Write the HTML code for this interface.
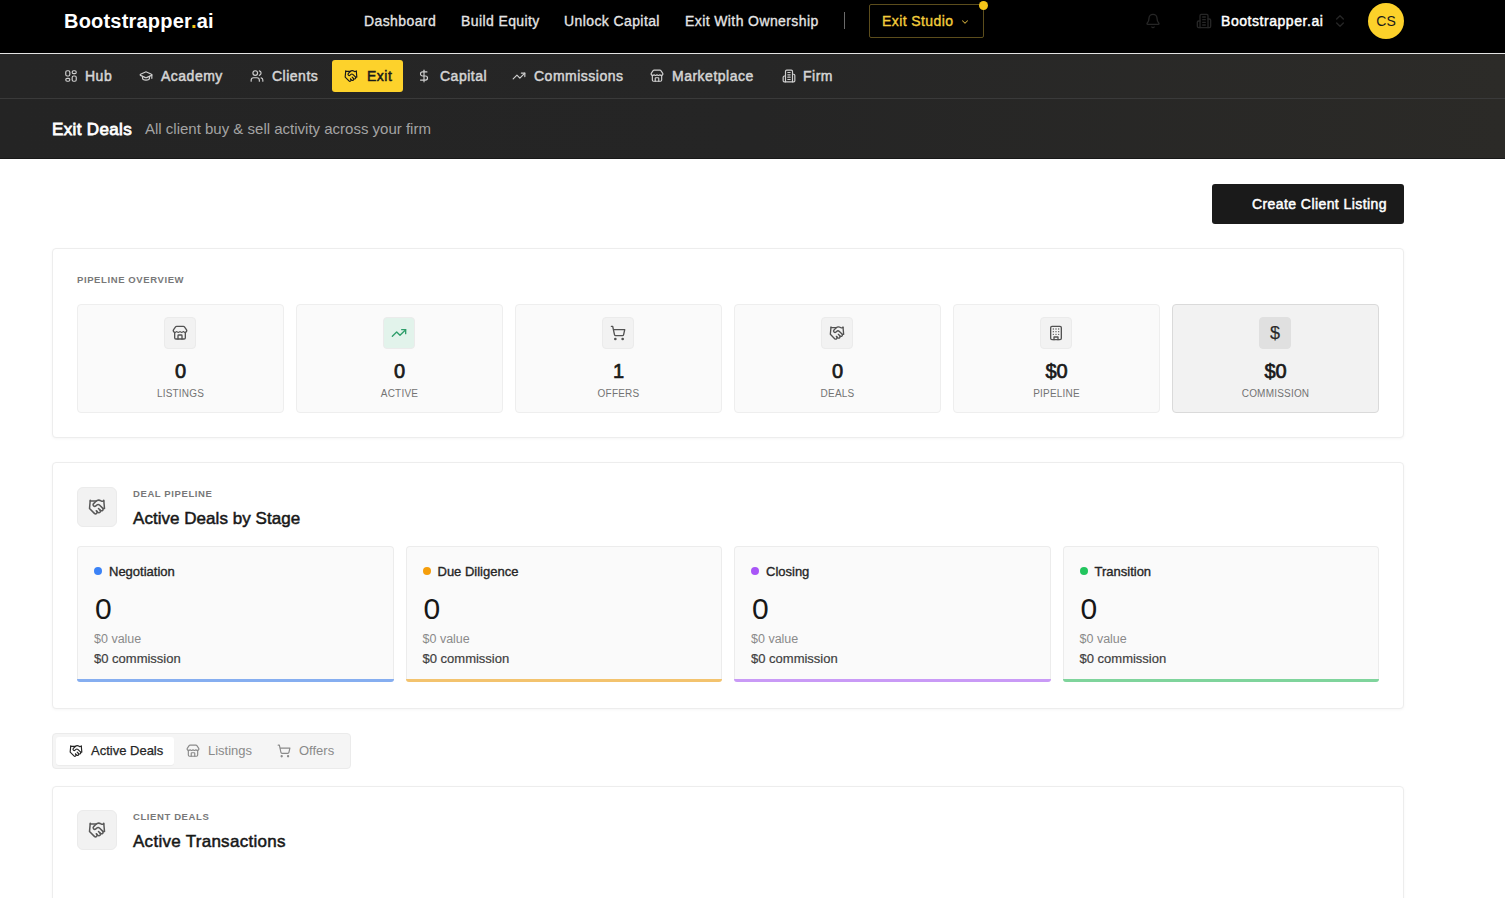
<!DOCTYPE html>
<html><head><meta charset="utf-8">
<style>
*{margin:0;padding:0;box-sizing:border-box}
html,body{width:1505px;height:898px;overflow:hidden;background:#fff;font-family:"Liberation Sans",sans-serif}
.abs{position:absolute}
.t{position:absolute;white-space:nowrap;line-height:1}
svg{position:absolute;fill:none;stroke-linecap:round;stroke-linejoin:round}
#top{position:absolute;left:0;top:0;width:1505px;height:54px;background:#000;border-bottom:1px solid #e3e3e3}
#nav2{position:absolute;left:0;top:54px;width:1505px;height:45px;background:linear-gradient(90deg,#252525 0%,#262626 50%,#2c2b28 100%);border-bottom:1px solid #3a3a3a}
#hdr{position:absolute;left:0;top:99px;width:1505px;height:60px;background:linear-gradient(90deg,#242424 0%,#252525 50%,#2b2a27 100%);border-bottom:1px solid #181818}
.toplink{color:#e5e5e5;font-size:14px;letter-spacing:0.4px;-webkit-text-stroke:0.3px #e5e5e5}
.nv{color:#d4d4d4;font-size:14px;letter-spacing:0.5px;-webkit-text-stroke:0.5px currentColor}
.card{position:absolute;background:#fff;border:1px solid #ededed;border-radius:4px;box-shadow:0 1px 3px rgba(0,0,0,0.04)}
.stat{position:absolute;top:304px;width:207px;height:109px;background:#fafafa;border:1px solid #eeeeee;border-radius:4px}
.stat .ib{position:absolute;left:86px;top:12px;width:32px;height:32px;background:#f2f2f2;border:1px solid #ebebeb;border-radius:4px}
.stat.hl{background:#f2f2f2;border-color:#dadada}
.stat .num{position:absolute;left:0;width:205px;text-align:center;top:56px;font-size:20px;color:#1a1a1a;-webkit-text-stroke:0.7px #1a1a1a;line-height:1}
.stat .lbl{position:absolute;left:0;width:205px;text-align:center;top:84px;font-size:10px;color:#737373;letter-spacing:0.2px;line-height:1}
.eyebrow{font-size:9.5px;font-weight:bold;color:#787878;letter-spacing:0.6px}
.stage{position:absolute;top:546px;width:316.5px;height:136px;background:#fafafa;border:1px solid #ececec;border-bottom:none;border-radius:4px}
.stage .bar{position:absolute;left:-1px;right:-1px;bottom:0;height:3px;border-radius:0 0 4px 4px}
.stage .dot{position:absolute;left:16px;top:20px;width:8px;height:8px;border-radius:50%}
.stage .nm{position:absolute;left:31px;top:18px;font-size:13px;color:#262626;-webkit-text-stroke:0.35px #262626}
.stage .big{position:absolute;left:17px;top:47px;font-size:30px;color:#171717}
.stage .val{position:absolute;left:16px;top:86px;font-size:12.5px;color:#8a8a8a}
.stage .com{position:absolute;left:16px;top:105px;font-size:13px;color:#404040;-webkit-text-stroke:0.2px #404040}
</style></head><body>
<div id="top"></div>
<div id="nav2"></div>
<div id="hdr"></div>

<!-- top bar -->
<div class="t" style="left:64px;top:11px;font-size:20px;font-weight:bold;color:#fff;letter-spacing:0.2px">Bootstrapper<span style="color:#f5c518">.</span>ai</div>
<div class="t toplink" style="left:364px;top:14px">Dashboard</div>
<div class="t toplink" style="left:461px;top:14px">Build Equity</div>
<div class="t toplink" style="left:564px;top:14px">Unlock Capital</div>
<div class="t toplink" style="left:685px;top:14px">Exit With Ownership</div>
<div class="abs" style="left:844px;top:12px;width:1px;height:17px;background:#6a6a6a"></div>
<div class="abs" style="left:869px;top:4px;width:115px;height:34px;border:1px solid #5c4d1c;border-radius:2px"></div>
<div class="t" style="left:882px;top:14px;font-size:14px;color:#f3cd3c;letter-spacing:0.4px;-webkit-text-stroke:0.35px #f3cd3c">Exit Studio</div>
<svg style="left:960px;top:17px" width="10" height="10" viewBox="0 0 24 24" stroke="#c9a73a" stroke-width="2.5"><path d="m6 9 6 6 6-6"/></svg>
<div class="abs" style="left:979px;top:1px;width:9px;height:9px;border-radius:50%;background:#f5c518"></div>

<svg style="left:1145px;top:13px" width="16" height="16" viewBox="0 0 24 24" stroke="#262626" stroke-width="2"><path d="M10.268 21a2 2 0 0 0 3.464 0"/><path d="M3.262 15.326A1 1 0 0 0 4 17h16a1 1 0 0 0 .74-1.673C19.41 13.956 18 12.499 18 8A6 6 0 0 0 6 8c0 4.499-1.411 5.956-2.738 7.326"/></svg>
<svg style="left:1196px;top:13px" width="16" height="16" viewBox="0 0 24 24" stroke="#262626" stroke-width="2"><path d="M6 22V4a2 2 0 0 1 2-2h8a2 2 0 0 1 2 2v18Z"/><path d="M6 12H4a2 2 0 0 0-2 2v6a2 2 0 0 0 2 2h2"/><path d="M18 9h2a2 2 0 0 1 2 2v9a2 2 0 0 1-2 2h-2"/><path d="M10 6h4"/><path d="M10 10h4"/><path d="M10 14h4"/><path d="M10 18h4"/></svg>
<div class="t" style="left:1221px;top:14px;font-size:14px;color:#fff;letter-spacing:0.55px;-webkit-text-stroke:0.45px #fff">Bootstrapper.ai</div>
<svg style="left:1332px;top:13px" width="16" height="16" viewBox="0 0 24 24" stroke="#262626" stroke-width="2"><path d="m7 15 5 5 5-5"/><path d="m7 9 5-5 5 5"/></svg>
<div class="abs" style="left:1368px;top:3px;width:36px;height:36px;border-radius:50%;background:#fcd12a"></div>
<div class="t" style="left:1368px;top:14px;width:36px;text-align:center;font-size:14px;color:#1a1a1a">CS</div>

<!-- nav 2 -->
<div class="abs" style="left:332px;top:60px;width:71px;height:32px;background:#fdd22b;border-radius:3px"></div>
<svg style="left:64px;top:69px" width="14" height="14" viewBox="0 0 24 24" stroke="#cfcfcf" stroke-width="2"><rect width="7" height="9" x="3" y="3" rx="2.5"/><rect width="7" height="5" x="14" y="3" rx="2.5"/><rect width="7" height="9" x="14" y="12" rx="2.5"/><rect width="7" height="5" x="3" y="16" rx="2.5"/></svg>
<div class="t nv" style="left:85px;top:69px">Hub</div>
<svg style="left:139px;top:69px" width="14" height="14" viewBox="0 0 24 24" stroke="#cfcfcf" stroke-width="2"><path d="M21.42 10.922a1 1 0 0 0-.019-1.838L12.83 5.18a2 2 0 0 0-1.66 0L2.6 9.08a1 1 0 0 0 0 1.832l8.57 3.908a2 2 0 0 0 1.66 0z"/><path d="M22 10v6"/><path d="M6 12.5V16a6 3 0 0 0 12 0v-3.5"/></svg>
<div class="t nv" style="left:161px;top:69px">Academy</div>
<svg style="left:250px;top:69px" width="14" height="14" viewBox="0 0 24 24" stroke="#cfcfcf" stroke-width="2"><path d="M16 21v-2a4 4 0 0 0-4-4H6a4 4 0 0 0-4 4v2"/><circle cx="9" cy="7" r="4"/><path d="M22 21v-2a4 4 0 0 0-3-3.87"/><path d="M16 3.13a4 4 0 0 1 0 7.75"/></svg>
<div class="t nv" style="left:272px;top:69px">Clients</div>
<svg style="left:344px;top:69px" width="14" height="14" viewBox="0 0 24 24" stroke="#1a1a1a" stroke-width="2"><path d="m11 17 2 2a1 1 0 1 0 3-3"/><path d="m14 14 2.5 2.5a1 1 0 1 0 3-3l-3.88-3.88a3 3 0 0 0-4.24 0l-.88.88a1 1 0 1 1-3-3l2.81-2.81a5.79 5.79 0 0 1 7.06-.87l.47.28a2 2 0 0 0 1.42.25L21 4"/><path d="m21 3 1 11h-2"/><path d="M3 3 2 14l6.5 6.5a1 1 0 1 0 3-3"/><path d="M3 4h8"/></svg>
<div class="t nv" style="left:367px;top:69px;color:#1a1a1a">Exit</div>
<svg style="left:417px;top:69px" width="14" height="14" viewBox="0 0 24 24" stroke="#cfcfcf" stroke-width="2"><line x1="12" x2="12" y1="2" y2="22"/><path d="M17 5H9.5a3.5 3.5 0 0 0 0 7h5a3.5 3.5 0 0 1 0 7H6"/></svg>
<div class="t nv" style="left:440px;top:69px">Capital</div>
<svg style="left:512px;top:69px" width="14" height="14" viewBox="0 0 24 24" stroke="#cfcfcf" stroke-width="2"><polyline points="22 7 13.5 15.5 8.5 10.5 2 17"/><polyline points="16 7 22 7 22 13"/></svg>
<div class="t nv" style="left:534px;top:69px">Commissions</div>
<svg style="left:650px;top:69px" width="14" height="14" viewBox="0 0 24 24" stroke="#cfcfcf" stroke-width="2"><path d="M15 21v-5a1 1 0 0 0-1-1h-4a1 1 0 0 0-1 1v5"/><path d="M17.774 10.31a1.12 1.12 0 0 0-1.549 0 2.5 2.5 0 0 1-3.451 0 1.12 1.12 0 0 0-1.548 0 2.5 2.5 0 0 1-3.452 0 1.12 1.12 0 0 0-1.549 0 2.5 2.5 0 0 1-3.77-3.248l2.889-4.184A2 2 0 0 1 7 2h10a2 2 0 0 1 1.653.873l2.895 4.192a2.5 2.5 0 0 1-3.774 3.244"/><path d="M4 10.95V19a2 2 0 0 0 2 2h12a2 2 0 0 0 2-2v-8.05"/></svg>
<div class="t nv" style="left:672px;top:69px">Marketplace</div>
<svg style="left:782px;top:69px" width="14" height="14" viewBox="0 0 24 24" stroke="#cfcfcf" stroke-width="2"><path d="M6 22V4a2 2 0 0 1 2-2h8a2 2 0 0 1 2 2v18Z"/><path d="M6 12H4a2 2 0 0 0-2 2v6a2 2 0 0 0 2 2h2"/><path d="M18 9h2a2 2 0 0 1 2 2v9a2 2 0 0 1-2 2h-2"/><path d="M10 6h4"/><path d="M10 10h4"/><path d="M10 14h4"/><path d="M10 18h4"/></svg>
<div class="t nv" style="left:803px;top:69px">Firm</div>

<!-- header -->
<div class="t" style="left:52px;top:121px;font-size:17px;color:#fff;letter-spacing:0.35px;-webkit-text-stroke:0.8px #fff">Exit Deals</div>
<div class="t" style="left:145px;top:121px;font-size:15px;color:#a3a3a3">All client buy &amp; sell activity across your firm</div>

<!-- create button -->
<div class="abs" style="left:1212px;top:184px;width:192px;height:40px;background:#1a1a1a;border-radius:3px"></div>
<div class="t" style="left:1252px;top:197px;font-size:14px;color:#fff;letter-spacing:0.42px;-webkit-text-stroke:0.5px #fff">Create Client Listing</div>

<!-- overview card -->
<div class="card" style="left:52px;top:248px;width:1352px;height:190px"></div>
<div class="t eyebrow" style="left:77px;top:275px">PIPELINE OVERVIEW</div>

<div class="stat " style="left:77px"><div class="ib" style="background:#f2f2f2"></div><svg style="left:94px;top:20px" width="16" height="16" viewBox="0 0 24 24" stroke="#525252" stroke-width="2"><path d="M15 21v-5a1 1 0 0 0-1-1h-4a1 1 0 0 0-1 1v5"/><path d="M17.774 10.31a1.12 1.12 0 0 0-1.549 0 2.5 2.5 0 0 1-3.451 0 1.12 1.12 0 0 0-1.548 0 2.5 2.5 0 0 1-3.452 0 1.12 1.12 0 0 0-1.549 0 2.5 2.5 0 0 1-3.77-3.248l2.889-4.184A2 2 0 0 1 7 2h10a2 2 0 0 1 1.653.873l2.895 4.192a2.5 2.5 0 0 1-3.774 3.244"/><path d="M4 10.95V19a2 2 0 0 0 2 2h12a2 2 0 0 0 2-2v-8.05"/></svg><div class="num">0</div><div class="lbl">LISTINGS</div></div>
<div class="stat " style="left:296px"><div class="ib" style="background:#e2f3eb"></div><svg style="left:94px;top:20px" width="16" height="16" viewBox="0 0 24 24" stroke="#2f9e6b" stroke-width="2"><polyline points="22 7 13.5 15.5 8.5 10.5 2 17"/><polyline points="16 7 22 7 22 13"/></svg><div class="num">0</div><div class="lbl">ACTIVE</div></div>
<div class="stat " style="left:515px"><div class="ib" style="background:#f2f2f2"></div><svg style="left:94px;top:20px" width="16" height="16" viewBox="0 0 24 24" stroke="#525252" stroke-width="2"><circle cx="8" cy="21" r="1"/><circle cx="19" cy="21" r="1"/><path d="M2.05 2.05h2l2.66 12.42a2 2 0 0 0 2 1.58h9.78a2 2 0 0 0 1.95-1.57l1.65-7.43H5.12"/></svg><div class="num">1</div><div class="lbl">OFFERS</div></div>
<div class="stat " style="left:734px"><div class="ib" style="background:#f2f2f2"></div><svg style="left:94px;top:20px" width="16" height="16" viewBox="0 0 24 24" stroke="#525252" stroke-width="2"><path d="m11 17 2 2a1 1 0 1 0 3-3"/><path d="m14 14 2.5 2.5a1 1 0 1 0 3-3l-3.88-3.88a3 3 0 0 0-4.24 0l-.88.88a1 1 0 1 1-3-3l2.81-2.81a5.790 5.790 0 0 1 7.06-.87l.47.28a2 2 0 0 0 1.42.25L21 4"/><path d="m21 3 1 11h-2"/><path d="M3 3 2 14l6.5 6.5a1 1 0 1 0 3-3"/><path d="M3 4h8"/></svg><div class="num">0</div><div class="lbl">DEALS</div></div>
<div class="stat " style="left:953px"><div class="ib" style="background:#f2f2f2"></div><svg style="left:94px;top:20px" width="16" height="16" viewBox="0 0 24 24" stroke="#525252" stroke-width="2"><rect width="16" height="20" x="4" y="2" rx="2" ry="2"/><path d="M9 22v-4h6v4"/><path d="M8 6h.01"/><path d="M16 6h.01"/><path d="M12 6h.01"/><path d="M12 10h.01"/><path d="M12 14h.01"/><path d="M16 10h.01"/><path d="M16 14h.01"/><path d="M8 10h.01"/><path d="M8 14h.01"/></svg><div class="num">$0</div><div class="lbl">PIPELINE</div></div>
<div class="stat hl" style="left:1172px"><div class="ib" style="background:#e0e0e0;border-color:#e0e0e0"></div><div class="t" style="left:86px;top:19px;width:32px;text-align:center;font-size:18px;color:#2a2a2a;-webkit-text-stroke:0.15px #2a2a2a">$</div><div class="num">$0</div><div class="lbl">COMMISSION</div></div>

<!-- deal pipeline card -->
<div class="card" style="left:52px;top:462px;width:1352px;height:247px"></div>

<div class="abs" style="left:77px;top:487px;width:40px;height:40px;background:#f2f2f2;border:1px solid #ebebeb;border-radius:6px"></div><svg style="left:88px;top:498px" width="18" height="18" viewBox="0 0 24 24" stroke="#595959" stroke-width="2"><path d="m11 17 2 2a1 1 0 1 0 3-3"/><path d="m14 14 2.5 2.5a1 1 0 1 0 3-3l-3.88-3.88a3 3 0 0 0-4.24 0l-.88.88a1 1 0 1 1-3-3l2.81-2.81a5.79 5.79 0 0 1 7.06-.87l.47.28a2 2 0 0 0 1.42.25L21 4"/><path d="m21 3 1 11h-2"/><path d="M3 3 2 14l6.5 6.5a1 1 0 1 0 3-3"/><path d="M3 4h8"/></svg>
<div class="t eyebrow" style="left:133px;top:489px">DEAL PIPELINE</div>
<div class="t" style="left:133px;top:510px;font-size:17px;color:#171717;letter-spacing:0.04px;-webkit-text-stroke:0.5px #171717">Active Deals by Stage</div>
<div class="stage" style="left:77px"><div class="dot" style="background:#3b82f6"></div><div class="t nm">Negotiation</div><div class="t big">0</div><div class="t val">$0 value</div><div class="t com">$0 commission</div><div class="bar" style="background:#86aef0"></div></div>
<div class="stage" style="left:405.5px"><div class="dot" style="background:#f59e0b"></div><div class="t nm">Due Diligence</div><div class="t big">0</div><div class="t val">$0 value</div><div class="t com">$0 commission</div><div class="bar" style="background:#f3c36e"></div></div>
<div class="stage" style="left:734px"><div class="dot" style="background:#a855f7"></div><div class="t nm">Closing</div><div class="t big">0</div><div class="t val">$0 value</div><div class="t com">$0 commission</div><div class="bar" style="background:#c99af6"></div></div>
<div class="stage" style="left:1062.5px"><div class="dot" style="background:#22c55e"></div><div class="t nm">Transition</div><div class="t big">0</div><div class="t val">$0 value</div><div class="t com">$0 commission</div><div class="bar" style="background:#7fd49c"></div></div>
<!-- tabs -->
<div class="abs" style="left:52px;top:733px;width:299px;height:36px;background:#f5f5f5;border:1px solid #ebebeb;border-radius:4px"></div>

<div class="abs" style="left:56px;top:737px;width:118px;height:28px;background:#fff;border-radius:3px;box-shadow:0 1px 1px rgba(0,0,0,0.04)"></div>
<svg style="left:69px;top:744px" width="14" height="14" viewBox="0 0 24 24" stroke="#262626" stroke-width="2"><path d="m11 17 2 2a1 1 0 1 0 3-3"/><path d="m14 14 2.5 2.5a1 1 0 1 0 3-3l-3.88-3.88a3 3 0 0 0-4.24 0l-.88.88a1 1 0 1 1-3-3l2.81-2.81a5.79 5.79 0 0 1 7.06-.87l.47.28a2 2 0 0 0 1.42.25L21 4"/><path d="m21 3 1 11h-2"/><path d="M3 3 2 14l6.5 6.5a1 1 0 1 0 3-3"/><path d="M3 4h8"/></svg>
<div class="t" style="left:91px;top:744px;font-size:13px;color:#262626;-webkit-text-stroke:0.25px #262626">Active Deals</div>
<svg style="left:186px;top:744px" width="14" height="14" viewBox="0 0 24 24" stroke="#8a8a8a" stroke-width="2"><path d="M15 21v-5a1 1 0 0 0-1-1h-4a1 1 0 0 0-1 1v5"/><path d="M17.774 10.31a1.12 1.12 0 0 0-1.549 0 2.5 2.5 0 0 1-3.451 0 1.12 1.12 0 0 0-1.548 0 2.5 2.5 0 0 1-3.452 0 1.12 1.12 0 0 0-1.549 0 2.5 2.5 0 0 1-3.77-3.248l2.889-4.184A2 2 0 0 1 7 2h10a2 2 0 0 1 1.653.873l2.895 4.192a2.5 2.5 0 0 1-3.774 3.244"/><path d="M4 10.95V19a2 2 0 0 0 2 2h12a2 2 0 0 0 2-2v-8.05"/></svg>
<div class="t" style="left:208px;top:744px;font-size:13px;color:#8a8a8a">Listings</div>
<svg style="left:277px;top:744px" width="14" height="14" viewBox="0 0 24 24" stroke="#8a8a8a" stroke-width="2"><circle cx="8" cy="21" r="1"/><circle cx="19" cy="21" r="1"/><path d="M2.05 2.05h2l2.66 12.42a2 2 0 0 0 2 1.58h9.78a2 2 0 0 0 1.95-1.57l1.65-7.43H5.12"/></svg>
<div class="t" style="left:299px;top:744px;font-size:13px;color:#8a8a8a">Offers</div>
<!-- client deals card -->
<div class="card" style="left:52px;top:786px;width:1352px;height:140px"></div>
<div class="abs" style="left:77px;top:810px;width:40px;height:40px;background:#f2f2f2;border:1px solid #ebebeb;border-radius:6px"></div><svg style="left:88px;top:821px" width="18" height="18" viewBox="0 0 24 24" stroke="#595959" stroke-width="2"><path d="m11 17 2 2a1 1 0 1 0 3-3"/><path d="m14 14 2.5 2.5a1 1 0 1 0 3-3l-3.88-3.88a3 3 0 0 0-4.24 0l-.88.88a1 1 0 1 1-3-3l2.81-2.81a5.79 5.79 0 0 1 7.06-.87l.47.28a2 2 0 0 0 1.42.25L21 4"/><path d="m21 3 1 11h-2"/><path d="M3 3 2 14l6.5 6.5a1 1 0 1 0 3-3"/><path d="M3 4h8"/></svg>
<div class="t eyebrow" style="left:133px;top:812px">CLIENT DEALS</div>
<div class="t" style="left:133px;top:833px;font-size:17px;color:#171717;letter-spacing:0.28px;-webkit-text-stroke:0.5px #171717">Active Transactions</div>
</body></html>
